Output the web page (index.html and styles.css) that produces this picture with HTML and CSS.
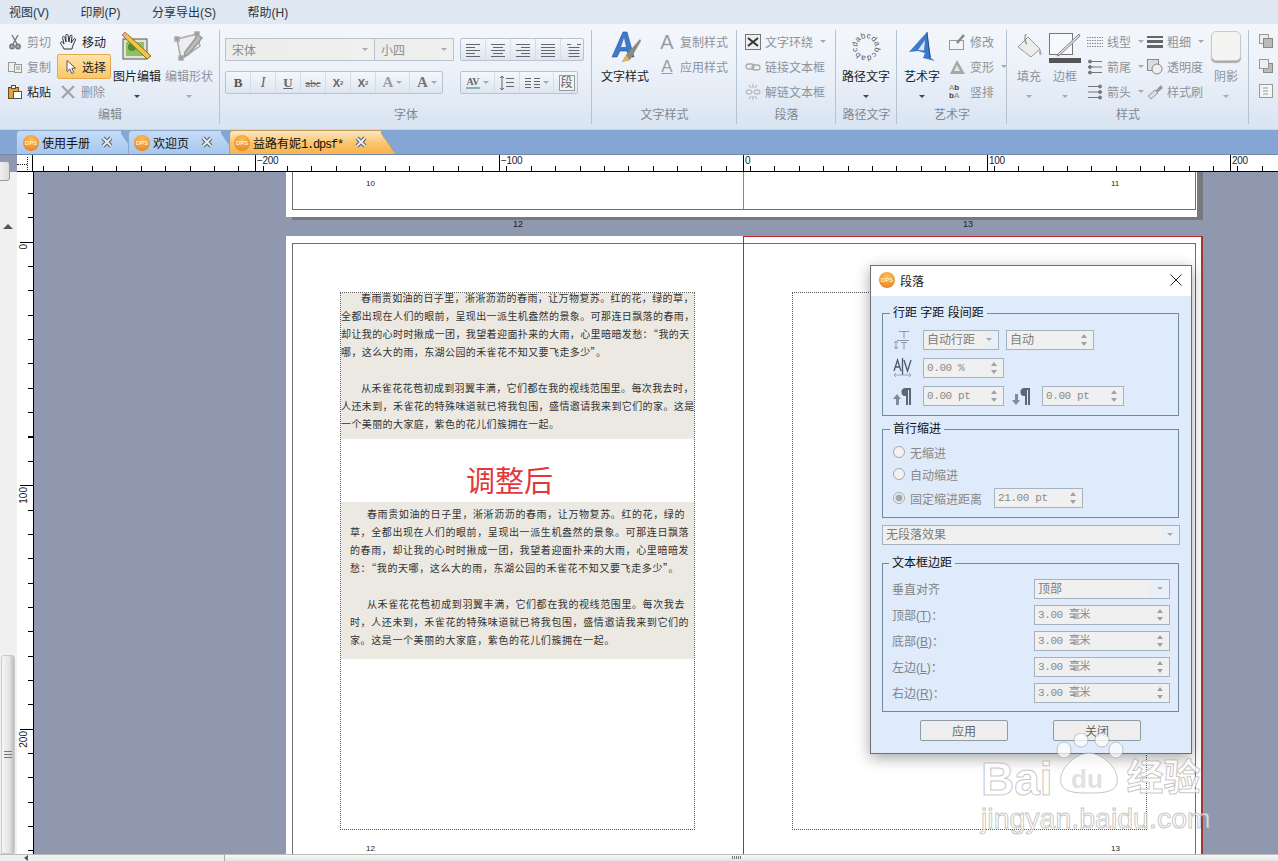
FILE: index.html
```html
<!DOCTYPE html>
<html lang="zh-CN">
<head>
    <meta charset="UTF-8">
    <title>段落</title>
    <link rel="stylesheet" href="styles.css">
</head>
<body>
<div class="app">
    <div class="menubar">
        <span>视图(V)</span><span>印刷(P)</span><span>分享导出(S)</span><span>帮助(H)</span>
    </div>

    <div class="ribbon">
        <!-- 编辑 -->
        <div class="grp grp-edit">
            <div class="grp-body">
                <div class="col col-cut">
                    <div class="sm off"><svg width="16" height="16" viewBox="0 0 16 16" fill="none" stroke="#777" stroke-width="1.4"><path d="M5 1l5 9M11 1L6 10"/><circle cx="5" cy="12.5" r="2.2" fill="#aaa"/><circle cx="11" cy="12.5" r="2.2" fill="#aaa"/></svg>剪切</div>
                    <div class="sm off"><svg width="16" height="16" viewBox="0 0 16 16" fill="#eee" stroke="#999"><rect x="1.5" y="3.5" width="7" height="9"/><rect x="7.5" y="5.5" width="7" height="8"/><path d="M9 8h4M9 10h4"/></svg>复制</div>
                    <div class="sm"><svg width="16" height="16" viewBox="0 0 16 16" stroke="#6b4a18"><rect x="1.5" y="3.5" width="10" height="11" fill="#d9a441"/><rect x="4.5" y="1.5" width="4" height="3" fill="#eee"/><rect x="6.5" y="7.5" width="8" height="7" fill="#fff" stroke="#456"/></svg>粘贴</div>
                </div>
                <div class="col col-move">
                    <div class="sm"><svg width="19" height="18" viewBox="0 0 19 18" fill="none" stroke="#333"><path d="M5 16c-1-3-4-5-3.500-6.500S4 9 5 11L3.500 4.500c0-1.500 2-1.500 2.300 0L7 9 6.800 2.500c0-1.500 2.200-1.500 2.300 0L10 9l1-6c.3-1.500 2.300-1.200 2 .5L12.200 10l2.500-4c.8-1.200 2.400-.3 1.800 1-1 2.500-3 5-3.500 9z"/></svg>移动</div>
                    <div class="sm sm-on"><svg width="14" height="16" viewBox="0 0 14 16" fill="#fff" stroke="#556"><path d="M3 1.500v11l2.800-2.500 2 4.500 2-1-2-4.300h3.700z"/></svg>选择</div>
                    <div class="sm off"><svg width="18" height="16" viewBox="0 0 18 16" fill="none" stroke="#a3a6ab" stroke-width="2.400"><path d="M3 2l12 12M15 2L3 14"/></svg>删除</div>
                </div>
                <div class="lg lg-img">
                    <div class="lg-icon"><svg width="32" height="30" viewBox="0 0 32 30"><rect x="2" y="8" width="24" height="20" fill="#dfe6d8" stroke="#555"/><rect x="5" y="11" width="18" height="14" fill="#8fc069"/><circle cx="11" cy="16" r="4" fill="#4e8f2f"/><path d="M4 1l26 24-4 3L1 4z" fill="#f2c542" stroke="#8a6a16"/><path d="M1 4l3-3 3 2.500-3 3z" fill="#e8a0a0"/></svg></div>
                    <span>图片编辑</span><i class="caret caret-dark"></i>
                </div>
                <div class="lg off lg-shape">
                    <div class="lg-icon"><svg width="30" height="30" viewBox="0 0 30 30" fill="none" stroke="#aaa" stroke-width="1.500"><path d="M3 8l20-5 3 12-19 13z" fill="#eee"/><path d="M24 4L11 21l-1 5 5-3L28 7z" fill="#bbb" stroke="#999"/><rect x="1" y="6" width="4" height="4" fill="#999"/><rect x="21" y="1" width="4" height="4" fill="#999"/><rect x="5" y="25" width="4" height="4" fill="#999"/></svg></div>
                    <span>编辑形状</span><i class="caret"></i>
                </div>
            </div>
            <div class="grp-label">编辑</div>
        </div>

        <!-- 字体 -->
        <div class="grp grp-font">
            <div class="grp-body font-rows">
                <div class="font-row">
                    <div class="combo combo-font">宋体<i class="caret"></i></div>
                    <div class="combo combo-size">小四<i class="caret"></i></div>
                    <div class="tools tools-align">
                        <b class="tool"><svg width="16" height="14" viewBox="0 0 16 14" stroke="#666"><path d="M1 1.500h14M1 4.500h9M1 7.500h14M1 10.500h9M1 13.500h14"/></svg></b>
                        <b class="tool"><svg width="16" height="14" viewBox="0 0 16 14" stroke="#666"><path d="M1 1.500h14M3 4.500h10M1 7.500h14M3 10.500h10M1 13.500h14"/></svg></b>
                        <b class="tool"><svg width="16" height="14" viewBox="0 0 16 14" stroke="#666"><path d="M1 1.500h14M6 4.500h9M1 7.500h14M6 10.500h9M1 13.500h14"/></svg></b>
                        <b class="tool"><svg width="16" height="14" viewBox="0 0 16 14" stroke="#666"><path d="M1 1.500h14M1 4.500h14M1 7.500h14M1 10.500h14M1 13.500h14"/></svg></b>
                        <b class="tool"><svg width="16" height="16" viewBox="0 0 16 16" stroke="#666" fill="none"><path d="M1 2.500h4M11 2.500h4M2.500 5.500h11M2.500 8.500h11M2.500 11.500h11M2.500 14.500h11"/></svg></b>
                    </div>
                </div>
                <div class="font-row">
                    <div class="tools tools-format">
                        <b class="tool tx-b">B</b>
                        <b class="tool tx-i">I</b>
                        <b class="tool tx-u">U</b>
                        <b class="tool tx-s">abc</b>
                        <b class="tool tx-x">X<sub>2</sub></b>
                        <b class="tool tx-x">X<sup>2</sup></b>
                        <b class="tool tool-wide tx-a">A<i class="caret"></i></b>
                        <b class="tool tool-wide tx-a tx-a2">A<i class="caret"></i></b>
                    </div>
                    <div class="tools tools-para">
                        <b class="tool tool-wide tx-av"><span>AV</span><i class="caret"></i></b>
                        <b class="tool"><svg width="16" height="16" viewBox="0 0 16 16" stroke="#666" fill="none"><path d="M3 1v14M1 3l2-2 2 2M1 13l2 2 2-2M7 3.500h8M7 7.500h8M7 11.500h8"/></svg></b>
                        <b class="tool tool-wide"><svg width="15" height="12" viewBox="0 0 15 12" stroke="#666"><path d="M0 1.500h6M0 4.500h6M0 7.500h6M0 10.500h6M9 1.500h6M9 4.500h6M9 7.500h6M9 10.500h6"/></svg><i class="caret"></i></b>
                        <b class="tool tx-duan"><span>段</span></b>
                    </div>
                </div>
            </div>
            <div class="grp-label">字体</div>
        </div>

        <!-- 文字样式 -->
        <div class="grp grp-tstyle">
            <div class="grp-body">
                <div class="lg lg-tstyle">
                    <div class="lg-icon"><svg width="34" height="32" viewBox="0 0 34 32"><path d="M15 1h4l7 25h-5l-2-6h-7l-3 6H4z" fill="#3f79c9" stroke="#23508f" stroke-width=".6"/><path d="M16 7l-3 9h5z" fill="#e7eff9"/><path d="M32 8L18 24l-4 7 8-2 11-19z" fill="#8d8a80"/><path d="M14 31l4-7 4 5z" fill="#e3b25a"/></svg></div>
                    <span>文字样式</span>
                </div>
                <div class="col col-tstyle">
                    <div class="sm off"><span class="big-a">A</span>复制样式</div>
                    <div class="sm off"><span class="big-a big-a2">A</span>应用样式</div>
                </div>
            </div>
            <div class="grp-label">文字样式</div>
        </div>

        <!-- 段落 -->
        <div class="grp grp-para">
            <div class="grp-body">
                <div class="col col-para">
                    <div class="sm off"><svg width="16" height="16" viewBox="0 0 16 16" stroke="#777"><rect x=".5" y=".5" width="15" height="15" fill="#eee"/><path d="M3 4l10 8M13 4L3 12" stroke="#333" stroke-width="2"/></svg>文字环绕<i class="caret"></i></div>
                    <div class="sm off"><svg width="16" height="16" viewBox="0 0 16 16" fill="none" stroke="#aaa" stroke-width="1.300"><rect x="1" y="5" width="8" height="5" rx="2.500"/><rect x="7" y="6" width="8" height="5" rx="2.500"/></svg>链接文本框</div>
                    <div class="sm off"><svg width="16" height="16" viewBox="0 0 16 16" fill="none" stroke="#aaa"><path d="M4 1l2 3M8 0v4M12 1l-2 3M4 15l2-3M8 16v-4M12 15l-2-3"/><rect x="1" y="6" width="6" height="4" rx="2"/><rect x="9" y="6" width="6" height="4" rx="2"/></svg>解链文本框</div>
                </div>
            </div>
            <div class="grp-label">段落</div>
        </div>

        <!-- 路径文字 -->
        <div class="grp grp-path">
            <div class="grp-body">
                <div class="lg lg-path">
                    <div class="lg-icon"><svg class="path-ico" width="32" height="32" viewBox="0 0 32 32" fill="none"><path id="ringPath" d="M16 25a9 9 0 1 1 .1 0z"/><text><textPath href="#ringPath">abcdabcdabcd</textPath></text></svg></div>
                    <span>路径文字</span><i class="caret caret-dark"></i>
                </div>
            </div>
            <div class="grp-label">路径文字</div>
        </div>

        <!-- 艺术字 -->
        <div class="grp grp-art">
            <div class="grp-body">
                <div class="lg lg-art">
                    <div class="lg-icon"><svg width="28" height="32" viewBox="0 0 28 32"><path d="M19 1L1 21l9-1 7 2-2 5 12 3-4-3z" fill="#3f79c9"/><path d="M17 9l-7 10 6 .500z" fill="#dbe6f3"/><path d="M19 1l3 26" stroke="#23508f"/></svg></div>
                    <span>艺术字</span><i class="caret caret-dark"></i>
                </div>
                <div class="col col-art">
                    <div class="sm off"><svg width="17" height="16" viewBox="0 0 17 16"><rect x=".5" y="6.500" width="14" height="9" fill="#f4f4f4" stroke="#999"/><path d="M15 1L8 9" stroke="#888" stroke-width="2.500"/></svg>修改</div>
                    <div class="sm off"><svg width="17" height="16" viewBox="0 0 17 16"><path d="M8 1l8 14H1z" fill="#a5a8a6"/><path d="M8 6l-3 6h6z" fill="#e3e6e4"/></svg>变形<i class="caret"></i></div>
                    <div class="sm off"><span class="ab">A<b>b</b><br><b>b</b><span>A</span></span>竖排</div>
                </div>
            </div>
            <div class="grp-label">艺术字</div>
        </div>

        <!-- 样式 -->
        <div class="grp grp-style">
            <div class="grp-body">
                <div class="lg off lg-fill">
                    <div class="lg-icon"><svg width="28" height="32" viewBox="0 0 28 32"><path d="M3 16L13 6l12 12-9 8z" fill="#ececec" stroke="#999"/><path d="M11 3c-2 3-1 9 1 10" fill="none" stroke="#888" stroke-width="1.300"/><path d="M25 18c2 3 2 6 .5 6s-2-3-.5-6z" fill="#aaa"/></svg></div>
                    <span>填充</span><i class="caret"></i>
                </div>
                <div class="lg off lg-line">
                    <div class="lg-icon"><svg width="32" height="32" viewBox="0 0 32 32"><rect x=".5" y="2.500" width="23" height="21" fill="#f6f8fb" stroke="#777"/><path d="M30 3L10 22l-2 3 3-1L31 5z" fill="#ddd" stroke="#888"/><rect x="0" y="27" width="32" height="5" fill="#555"/></svg></div>
                    <span>边框</span><i class="caret"></i>
                </div>
                <div class="col col-ltype">
                    <div class="sm off"><svg width="16" height="16" viewBox="0 0 16 16" stroke="#888"><path d="M0 3.500h16M0 6.500h16M0 9.500h16M0 12.500h16" stroke-dasharray="1.500 1"/></svg>线型<i class="caret"></i></div>
                    <div class="sm off"><svg width="16" height="16" viewBox="0 0 16 16" stroke="#777"><path d="M1 2.500h14M1 8h14M1 13.500h14"/><circle cx="3" cy="2.500" r="1.500" fill="#777"/><circle cx="3" cy="8" r="1.500" fill="#777"/><circle cx="3" cy="13.500" r="1.500" fill="#777"/></svg>箭尾<i class="caret"></i></div>
                    <div class="sm off"><svg width="16" height="16" viewBox="0 0 16 16" stroke="#777"><path d="M1 2.500h14M1 8h14M1 13.500h14"/><circle cx="13" cy="2.500" r="1.500" fill="#777"/><circle cx="13" cy="8" r="1.500" fill="#777"/><circle cx="13" cy="13.500" r="1.500" fill="#777"/></svg>箭头<i class="caret"></i></div>
                </div>
                <div class="col col-thick">
                    <div class="sm off"><svg width="16" height="16" viewBox="0 0 16 16" fill="#666"><rect y="2" width="16" height="2"/><rect y="6" width="16" height="3"/><rect y="11" width="16" height="3"/></svg>粗细<i class="caret"></i></div>
                    <div class="sm off"><svg width="16" height="16" viewBox="0 0 16 16"><rect x=".5" y=".5" width="11" height="11" fill="#ddd" stroke="#888"/><circle cx="10" cy="10" r="5" fill="#eee" stroke="#888"/></svg>透明度</div>
                    <div class="sm off"><svg width="16" height="16" viewBox="0 0 16 16"><path d="M14 1L8 7l2 2 6-5z" fill="#999"/><path d="M8 6L1 12l3 3 7-6z" fill="#ddd" stroke="#999"/></svg>样式刷</div>
                </div>
                <div class="lg off lg-shadow">
                    <div class="lg-icon"><div class="shadow-box"></div></div>
                    <span>阴影</span><i class="caret"></i>
                </div>
            </div>
            <div class="grp-label">样式</div>
        </div>

        <!-- 排列 (cut off) -->
        <div class="grp-cut">
            <svg width="14" height="14" viewBox="0 0 14 14"><rect x=".5" y=".5" width="9" height="9" fill="#eee" stroke="#999"/><rect x="4.500" y="4.500" width="9" height="9" fill="#bbb" stroke="#888"/></svg>
            <svg width="14" height="14" viewBox="0 0 14 14"><rect x="4.500" y="4.500" width="9" height="9" fill="#bbb" stroke="#888"/><rect x=".5" y=".5" width="9" height="9" fill="#eee" stroke="#999"/></svg>
            <svg width="14" height="14" viewBox="0 0 14 14" fill="#f4f4f4" stroke="#999"><rect x=".5" y=".5" width="13" height="13"/><path d="M4 4h5M4 7h5M4 10h5"/></svg>
        </div>
    </div>

    <div class="tabbar">
        <div class="tab tab1"><span class="dps">DPS</span><span>使用手册</span><svg class="tab-x" width="12" height="12" viewBox="0 0 12 12" fill="none"><path d="M2 2l8 8M10 2L2 10" stroke="#556070" stroke-width="4"/><path d="M2 2l8 8M10 2L2 10" stroke="#e8edf3" stroke-width="2"/></svg></div>
        <div class="tab tab2"><span class="dps">DPS</span><span>欢迎页</span><svg class="tab-x" width="12" height="12" viewBox="0 0 12 12" fill="none"><path d="M2 2l8 8M10 2L2 10" stroke="#556070" stroke-width="4"/><path d="M2 2l8 8M10 2L2 10" stroke="#e8edf3" stroke-width="2"/></svg></div>
        <div class="tab tab3 active"><span class="dps">DPS</span><span>益路有妮<em>1.dpsf*</em></span><svg class="tab-x" width="12" height="12" viewBox="0 0 12 12" fill="none"><path d="M2 2l8 8M10 2L2 10" stroke="#556070" stroke-width="4"/><path d="M2 2l8 8M10 2L2 10" stroke="#e8edf3" stroke-width="2"/></svg></div>
    </div>

    <div class="hruler">
        <div class="corner"></div>
        <span class="hmark" style="left:255px">−200</span>
        <span class="hmark" style="left:499px">−100</span>
        <span class="hmark" style="left:743px">0</span>
        <span class="hmark" style="left:987px">100</span>
        <span class="hmark" style="left:1230px">200</span>
    </div>

    <div class="main">
        <div class="vscroll">
            <div class="vs-top"></div>
            <i class="vs-up"></i>
            <div class="vs-thumb"><span></span></div>
        </div>
        <div class="vruler">
            <span class="vmark" style="top:70px"><em>0</em></span>
            <span class="vmark" style="top:313px"><em>100</em></span>
            <span class="vmark" style="top:557px"><em>200</em></span>
        </div>

        <div class="canvas">
            <div class="page page-prev">
                <div class="page-inner"></div>
                <span class="fold"></span>
                <span class="pno pno-10">10</span>
                <span class="pno pno-11">11</span>
            </div>
            <span class="pno pno-12">12</span>
            <span class="pno pno-13">13</span>

            <div class="page page-cur">
                <div class="page-inner"></div>
                <div class="spread-right"></div>
                <span class="pno pno-b12">12</span>
                <span class="pno pno-b13">13</span>

                <div class="frame frame-left">
                    <div class="para-block before">
                        <p class="ind">春雨贵如油的日子里，淅淅沥沥的春雨，让万物复苏。红的花，绿的草，<br>全都出现在人们的眼前，呈现出一派生机盎然的景象。可那连日飘落的春雨，<br>却让我的心时时揪成一团，我望着迎面扑来的大雨，心里暗暗发愁：“我的天<br>哪，这么大的雨，东湖公园的禾雀花不知又要飞走多少”。</p>
                        <p class="ind gap">从禾雀花花苞初成到羽翼丰满，它们都在我的视线范围里。每次我去时，<br>人还未到，禾雀花的特殊味道就已将我包围，盛情邀请我来到它们的家。这是<br>一个美丽的大家庭，紫色的花儿们簇拥在一起。</p>
                    </div>
                    <div class="after-title">调整后</div>
                    <div class="para-block after">
                        <p class="ind">春雨贵如油的日子里，淅淅沥沥的春雨，让万物复苏。红的花，绿的<br>草，全都出现在人们的眼前，呈现出一派生机盎然的景象。可那连日飘落<br>的春雨，却让我的心时时揪成一团，我望着迎面扑来的大雨，心里暗暗发<br>愁：“我的天哪，这么大的雨，东湖公园的禾雀花不知又要飞走多少”。</p>
                        <p class="ind gap">从禾雀花花苞初成到羽翼丰满，它们都在我的视线范围里。每次我去<br>时，人还未到，禾雀花的特殊味道就已将我包围，盛情邀请我来到它们的<br>家。这是一个美丽的大家庭，紫色的花儿们簇拥在一起。</p>
                    </div>
                </div>
                <div class="frame frame-right"></div>
            </div>

            <!-- 段落 dialog -->
            <div class="dialog">
                <div class="dlg-title">
                    <span class="dps dps-lg">DPS</span>
                    <span class="dlg-name">段落</span>
                    <svg class="dlg-close" width="12" height="12" viewBox="0 0 12 12" stroke="#222" fill="none"><path d="M.5.500l11 11M11.500.500l-11 11"/></svg>
                </div>
                <div class="dlg-body">
                    <fieldset class="fs fs-spacing">
                        <legend>行距 字距 段间距</legend>
                        <div class="row">
                            <svg class="row-ico" width="18" height="20" viewBox="0 0 18 20" stroke="#8b97a5" fill="none"><path d="M6 1.500h10M11 1.500v7M4 10.500h12M3 11v8M1 13l2-2 2 2M1 17l2 2 2-2M8 12.500h6M11 12.500v7"/></svg>
                            <div class="field w76 off-combo">自动行距<i class="caret"></i></div>
                            <div class="field w88 spin">自动</div>
                        </div>
                        <div class="row">
                            <svg class="row-ico" width="20" height="20" viewBox="0 0 20 20" stroke="#4d5966" fill="none" stroke-width="1.300"><path d="M1 13L4.500 2 8 13M2.300 9h4.400M11 2l3.500 11L18 2M9.500 0v17"/><path d="M1 17h17M3 15l-2 2 2 2M16 15l2 2-2 2" stroke="#99a4b0" stroke-width="1"/></svg>
                            <div class="field w81 spin mono">0.00 %</div>
                        </div>
                        <div class="row">
                            <svg class="row-ico" width="18" height="20" viewBox="0 0 18 20"><path d="M4 8l4 5H6v6H3v-6H0z" fill="#7f8c9a"/><path d="M12 2h6v17h-2V4h-1v15h-2v-9a4 4 0 0 1-1-8z" fill="#5a6774"/></svg>
                            <div class="field w81 spin mono">0.00 pt</div>
                            <svg class="row-ico2" width="18" height="20" viewBox="0 0 18 20"><path d="M4 19l4-5H6V8H3v6H0z" fill="#7f8c9a"/><path d="M12 2h6v17h-2V4h-1v15h-2v-9a4 4 0 0 1-1-8z" fill="#5a6774"/></svg>
                            <div class="field w82 spin mono">0.00 pt</div>
                        </div>
                    </fieldset>
                    <fieldset class="fs fs-indent">
                        <legend>首行缩进</legend>
                        <div class="radio-row"><i class="radio"></i>无缩进</div>
                        <div class="radio-row"><i class="radio"></i>自动缩进</div>
                        <div class="radio-row radio-last"><i class="radio checked"></i>固定缩进距离<div class="field w89 spin mono">21.00 pt</div></div>
                    </fieldset>
                    <div class="field effect off-combo">无段落效果<i class="caret"></i></div>
                    <fieldset class="fs fs-margin">
                        <legend>文本框边距</legend>
                        <div class="mrow"><span>垂直对齐</span><div class="field w136 off-combo">顶部<i class="caret"></i></div></div>
                        <div class="mrow"><span>顶部(<u>T</u>)：</span><div class="field w136 spin mono">3.00 毫米</div></div>
                        <div class="mrow"><span>底部(<u>B</u>)：</span><div class="field w136 spin mono">3.00 毫米</div></div>
                        <div class="mrow"><span>左边(<u>L</u>)：</span><div class="field w136 spin mono">3.00 毫米</div></div>
                        <div class="mrow"><span>右边(<u>R</u>)：</span><div class="field w136 spin mono">3.00 毫米</div></div>
                    </fieldset>
                    <div class="dlg-btns">
                        <button type="button">应用</button>
                        <button type="button">关闭</button>
                    </div>
                </div>
            </div>

            <!-- watermark -->
            <div class="wm">
                <div class="wm-top">
                    <span class="wm-bai">Bai</span>
                    <svg class="wm-paw" width="70" height="62" viewBox="0 0 70 62" fill="rgba(255,255,255,.72)" stroke="rgba(150,150,150,.55)"><ellipse cx="10" cy="17" rx="7" ry="8"/><ellipse cx="27" cy="7" rx="7" ry="7"/><ellipse cx="48" cy="7" rx="7" ry="7"/><ellipse cx="62" cy="17" rx="7" ry="8"/><path d="M35 20c12 0 31 15 28 30-2 10-16 10-28 10S9 60 7 50C4 35 23 20 35 20z"/><text x="17" y="55" class="wm-du">du</text></svg>
                    <span class="wm-cn">经验</span>
                </div>
                <div class="wm-url">jingyan.baidu.com</div>
            </div>
        </div>
    </div>

    <div class="hscroll">
        <i class="hs-left"></i>
        <div class="hs-thumb"><span></span></div>
    </div>
</div>
</body>
</html>
```

FILE: styles.css
```css
* {
    box-sizing: border-box;
}

html, body {
    margin: 0;
    height: 100%;
    overflow: hidden;
}

body {
    font-family: "Liberation Sans", "Noto Sans CJK SC", sans-serif;
    font-size: 12px;
    color: #222;
}

.app {
    width: 1278px;
    height: 861px;
    display: flex;
    flex-direction: column;
    background: #8f98ae;
}

/* menu */
.menubar {
    height: 25px;
    flex: none;
    display: flex;
    align-items: center;
    gap: 31.500px;
    padding: 0 0 1px 9px;
    background: #dfe8f3;
    border-bottom: 1px solid #f2f6fb;
    color: #2c3442;
}

/* ribbon */
.ribbon {
    height: 105px;
    flex: none;
    display: flex;
    background: linear-gradient(#f3f7fc, #eef3fa 35%, #d9e4f2);
    border-bottom: 1px solid #c9d6e6;
}

.grp {
    position: relative;
    display: flex;
    flex-direction: column;
    flex: none;
}

.grp::after {
    content: "";
    position: absolute;
    right: 0;
    top: 5px;
    bottom: 5px;
    width: 1px;
    background: #b4c2d2;
}

.grp-edit { width: 220px; }
.grp-font { width: 372px; }
.grp-tstyle { width: 145px; }
.grp-para { width: 99px; }
.grp-path { width: 61px; }
.grp-art { width: 110px; }
.grp-style { width: 242px; }

.grp-body {
    height: 79px;
    display: flex;
}

.grp-label {
    height: 25px;
    padding-top: 3px;
    text-align: center;
    color: #83888e;
    line-height: 17px;
}

.grp-cut {
    display: flex;
    flex-direction: column;
    gap: 11px;
    padding: 9px 0 0 10px;
}

.col {
    display: flex;
    flex-direction: column;
    padding-top: 4px;
    flex: none;
}

.sm {
    height: 25px;
    display: flex;
    align-items: center;
    gap: 4px;
    white-space: nowrap;
}

.off {
    color: #8f9398;
}

.sm-on {
    margin-left: -2px;
    width: 54px;
    padding-left: 6px;
    gap: 4px;
    background: linear-gradient(#fde3a8, #fbc768);
    border: 1px solid #e3a94e;
    border-radius: 2px;
}

.col-cut { width: 56px; padding-left: 7px; }
.col-move { width: 51px; padding-left: 3px; }
.col-tstyle { margin-left: 8px; }
.col-para { margin-left: 8px; }
.col-art { margin-left: 4px; }
.col-ltype { width: 60px; margin-left: 4px; }
.col-thick { width: 60px; }

.lg {
    display: flex;
    flex-direction: column;
    align-items: center;
    flex: none;
    white-space: nowrap;
}

.lg-icon {
    height: 42px;
    padding-top: 6px;
    display: flex;
    justify-content: center;
}

.lg > span {
    line-height: 20px;
}

.lg > .caret {
    margin: 8px 0 0;
}

.lg-img { width: 50px; margin-left: 5px; }
.lg-shape { width: 50px; margin-left: 2px; }
.lg-tstyle { width: 50px; margin-left: 8px; }
.lg-path { width: 60px; }
.lg-art { width: 46px; margin-left: 2px; }
.lg-fill { width: 36px; margin-left: 4px; }
.lg-line { width: 36px; }
.lg-shadow { width: 36px; margin-left: 1px; }

.caret {
    display: inline-block;
    width: 0;
    height: 0;
    margin-left: 3px;
    border: 3px solid transparent;
    border-top: 3px solid #a5aab0;
    border-bottom: 0;
}

.caret-dark {
    border-top-color: #444;
}

.big-a {
    width: 18px;
    margin-left: 0;
    font-family: "Liberation Sans", sans-serif;
    font-size: 20px;
    line-height: 20px;
    color: #9a9da1;
    text-align: center;
}

.big-a2 {
    font-size: 17px;
    text-decoration: underline;
}

.ab {
    width: 17px;
    font-size: 8px;
    line-height: 8px;
    color: #888;
}

.ab b {
    color: #444;
}

.shadow-box {
    width: 30px;
    height: 30px;
    background: #f4f4f2;
    border: 1px solid #c9c9c9;
    border-radius: 5px;
    box-shadow: 0 2px 1px #aaa;
}

.path-ico text {
    font: 8px "Liberation Sans", sans-serif;
    letter-spacing: .3px;
    fill: #555;
    stroke: none;
}

/* font group */
.font-rows {
    flex-direction: column;
    gap: 10px;
    padding: 13px 0 0 5px;
}

.font-row {
    display: flex;
    height: 23px;
}

.combo {
    height: 23px;
    display: flex;
    align-items: center;
    justify-content: space-between;
    padding: 0 6px;
    background: linear-gradient(90deg, #ececea, #f0f0ee);
    border: 1px solid #b9c3cf;
    color: #8a8d90;
}

.combo-font { width: 150px; }
.combo-size { width: 80px; margin-left: -1px; }

.tools {
    display: flex;
    height: 23px;
    background: linear-gradient(#f4f7fb, #dde6f1);
    border: 1px solid #b9c3cf;
    border-radius: 2px;
    flex: none;
}

.tools-align { width: 124px; margin-left: 6px; }
.tools-format { width: 218px; }
.tools-para { width: 118px; margin-left: 17px; }

.tool {
    width: 25px;
    flex: none;
    display: flex;
    align-items: center;
    justify-content: center;
    border-right: 1px solid #d5dde7;
    font-weight: normal;
    color: #666;
    overflow: hidden;
}

.tool:last-child {
    border-right: 0;
}

.tool-wide {
    width: 34px;
}

.tx-b { font: bold 13px "Liberation Serif", serif; color: #555; }
.tx-i { font: italic 14px "Liberation Serif", serif; }
.tx-u { font: bold 13px "Liberation Serif", serif; text-decoration: underline; }
.tx-s { font: 11px "Liberation Serif", serif; text-decoration: line-through; }
.tx-x { font: bold 11px "Liberation Sans", sans-serif; }
.tx-x sub, .tx-x sup { font-size: 6px; }
.tx-a { font: bold 15px "Liberation Serif", serif; color: #9a9ea3; }
.tx-a2 { color: #777; }
.tx-av span { font: bold 10px "Liberation Serif", serif; border-bottom: 2px solid #9aa; }

.tx-duan span {
    width: 16px;
    height: 16px;
    border: 1px solid #999;
    font-size: 12px;
    line-height: 14px;
    text-align: center;
    background: #f3f3f3;
}

/* tabs */
.tabbar {
    height: 25px;
    flex: none;
    display: flex;
    align-items: flex-end;
    padding-left: 16px;
    background: #85a5d4;
    border-bottom: 1px solid #6e88ab;
    position: relative;
    z-index: 1;
}

.tab {
    position: relative;
    height: 24px;
    display: flex;
    align-items: center;
    color: #111;
    border-top-left-radius: 4px;
    background: linear-gradient(#c5dbf6, #a7c7ef);
    border-top: 1px solid #8ba8cf;
    border-left: 1px solid #8ba8cf;
}

.tab::after {
    content: "";
    position: absolute;
    z-index: -1;
    top: -1px;
    bottom: 0;
    right: -7px;
    width: 20px;
    background: inherit;
    transform: skewX(35deg);
    border-top: 1px solid #8ba8cf;
    border-right: 1px solid #8ba8cf;
    border-top-right-radius: 4px;
}

.tab1 { width: 105px; padding-left: 6px; }
.tab2 { width: 93px; margin-left: 7px; padding-left: 5px; }
.tab3 { width: 152px; margin-left: 8px; padding-left: 4px; }

.tab.active {
    background: linear-gradient(#f9e8c6, #fbc66f 50%, #f9b34e);
    border-color: #c59a58;
}

.tab.active::after {
    border-color: #c59a58;
}

.tab em {
    font: 12px "Liberation Mono", monospace;
    letter-spacing: -1.200px;
}

.dps {
    width: 16px;
    height: 16px;
    margin-right: 3px;
    flex: none;
    border-radius: 50%;
    background: radial-gradient(circle at 50% 30%, #fbc057, #e67a14);
    color: #fff;
    font-size: 6px;
    line-height: 16px;
    text-align: center;
    overflow: hidden;
}

.tab-x {
    position: absolute;
    top: 5px;
}

.tab1 .tab-x { left: 84px; }
.tab2 .tab-x { left: 72px; }
.tab3 .tab-x { left: 125px; }

/* rulers */
.hruler {
    position: relative;
    height: 17px;
    flex: none;
    margin-left: 17px;
    background-color: #fff;
    background-image: repeating-linear-gradient(90deg, #000 0 1px, transparent 1px 24.370px);
    background-size: 100% 5px;
    background-position: 2px bottom;
    background-repeat: no-repeat;
    border-bottom: 1px solid #000;
}

.corner {
    position: absolute;
    left: 0;
    top: 0;
    width: 16px;
    height: 16px;
    background: #fff;
    border-right: 1px solid #000;
}

.corner::before {
    content: "";
    position: absolute;
    left: 0;
    top: 9px;
    width: 10px;
    border-top: 1px dotted #222;
}

.corner::after {
    content: "";
    position: absolute;
    left: 10px;
    top: 2px;
    height: 13px;
    border-left: 1px dotted #222;
}

.hmark {
    position: absolute;
    top: 0;
    height: 16px;
    margin-left: -17px;
    padding-left: 1px;
    border-left: 1px solid #000;
    font-size: 10px;
    letter-spacing: -.3px;
    line-height: 12px;
    color: #222;
}

.main {
    flex: 1;
    min-height: 0;
    display: flex;
}

.vscroll {
    position: relative;
    width: 17px;
    flex: none;
    background: #f0f0f0;
}

.vs-top {
    position: absolute;
    left: -4px;
    top: -11px;
    width: 14px;
    height: 20px;
    background: linear-gradient(90deg, #f2f2f2, #ddd);
    border: 1px solid #999;
    border-radius: 3px;
}

.vs-up {
    position: absolute;
    left: 3px;
    top: 52px;
    border: 5px solid transparent;
    border-top: 0;
    border-bottom: 5px solid #555;
}

.vs-thumb {
    position: absolute;
    left: 1px;
    top: 483px;
    bottom: 0;
    width: 14px;
    display: flex;
    align-items: center;
    justify-content: center;
    background: linear-gradient(90deg, #f6f6f6, #e4e4e4 60%, #bbb);
    border: 1px solid #ccc;
    border-radius: 3px 3px 0 0;
}

.vs-thumb span {
    width: 8px;
    height: 7px;
    border-top: 1px solid #777;
    border-bottom: 1px solid #777;
    background: linear-gradient(#777, #777) center / 100% 1px no-repeat;
}

.vruler {
    position: relative;
    width: 17px;
    flex: none;
    background-color: #fff;
    background-image: repeating-linear-gradient(#000 0 1px, transparent 1px 24.350px);
    background-size: 5px 100%;
    background-position: right 21px;
    background-repeat: no-repeat;
    border-right: 1px solid #000;
}

.vmark {
    position: absolute;
    left: 3px;
    right: 0;
    border-top: 1px solid #000;
}

.vmark em {
    position: absolute;
    left: -1px;
    top: 1px;
    writing-mode: vertical-rl;
    transform: rotate(180deg);
    font-style: normal;
    font-size: 10px;
    line-height: 10px;
}

/* canvas */
.canvas {
    position: relative;
    flex: 1;
    overflow: hidden;
    background: #8f98ae;
}

.page {
    position: absolute;
    left: 252px;
    background: #fff;
}

.page-prev {
    top: -20px;
    width: 911px;
    height: 65px;
    box-shadow: 6px 3px 0 #77797e;
}

.page-cur {
    top: 64px;
    width: 917px;
    height: 700px;
}

.page-inner {
    position: absolute;
    left: 6px;
    width: 904px;
    border: 1px solid #6e6e6e;
}

.page-prev .page-inner {
    top: 0;
    bottom: 7px;
}

.page-cur .page-inner {
    top: 7px;
    bottom: 0;
}

.fold {
    position: absolute;
    left: 457px;
    top: 0;
    bottom: 8px;
    border-left: 1px solid #888;
}

.spread-right {
    position: absolute;
    left: 457px;
    top: 0;
    right: 0;
    bottom: 0;
    border-left: 1px solid #c8222a;
    border-top: 1px solid #c8222a;
    border-right: 2px solid #9c3a3a;
}

.pno {
    position: absolute;
    font-size: 8px;
    line-height: 10px;
    color: #222;
}

.pno-10 { left: 80px; top: 27px; }
.pno-11 { left: 825px; top: 27px; }
.pno-12 { left: 479px; top: 47px; font-size: 9px; }
.pno-13 { left: 929px; top: 47px; font-size: 9px; }
.pno-b12 { left: 80px; top: 608px; }
.pno-b13 { left: 825px; top: 608px; }

.frame {
    position: absolute;
    top: 56px;
    width: 355px;
    height: 538px;
    border: 1px dotted #555;
}

.frame-left { left: 54px; }
.frame-right { left: 506px; }

.para-block {
    background: #ebe9e2;
    font-family: "Noto Sans CJK SC", sans-serif;
    font-size: 10px;
    line-height: 18px;
    letter-spacing: .4px;
    white-space: nowrap;
    color: #333;
}

.para-block p {
    margin: 0;
}

.para-block .ind {
    text-indent: 20px;
}

.para-block .gap {
    margin-top: 18px;
}

.before {
    display: flow-root;
    height: 146px;
}

.before p:first-child {
    margin-top: -4px;
}

.after {
    height: 157px;
    padding: 3px 0 0 9px;
    letter-spacing: .6px;
}

.after .ind {
    text-indent: 17px;
}

.after-title {
    height: 63px;
    padding: 21px 16px 0 0;
    text-align: center;
    font-size: 29px;
    line-height: 44px;
    color: #e0383b;
}

/* dialog */
.dialog {
    position: absolute;
    left: 836px;
    top: 93px;
    width: 322px;
    height: 489px;
    background: #dfebfb;
    border: 1px solid #6c7075;
    box-shadow: 0 4px 14px rgba(0, 0, 0, .35);
}

.dlg-title {
    height: 30px;
    display: flex;
    align-items: center;
    padding: 0 9px 2px 8px;
    background: #fff;
}

.dps-lg {
    margin-right: 5px;
}

.dlg-name {
    flex: 1;
    color: #222;
}

.dlg-body {
    padding: 9px 12px 0 11px;
}

.fs {
    margin: 0;
    min-width: 0;
    border: 1px solid #6f8b9c;
    padding: 0;
}

.fs legend {
    margin-left: -3px;
    padding: 0 3px;
    height: 16px;
    line-height: 16px;
    color: #111;
}

.fs-spacing {
    height: 111px;
    padding: 9px 0 0 10px;
    display: flex;
    flex-direction: column;
    gap: 8px;
}

.fs-indent {
    height: 97px;
    margin-top: 5px;
    padding: 4px 0 0 10px;
    color: #888;
}

.fs-margin {
    height: 157px;
    margin-top: 10px;
    padding: 8px 8px 0 9px;
    display: flex;
    flex-direction: column;
    gap: 6px;
}

.row {
    position: relative;
    height: 20px;
    display: flex;
    padding-left: 30px;
    gap: 7px;
}

.row-ico {
    position: absolute;
    left: 0;
    top: 0;
}

.row-ico2 {
    margin: 0 5px 0 1px;
}

.field {
    position: relative;
    height: 20px;
    flex: none;
    padding-left: 3px;
    background: #f0f0f0;
    border: 1px solid #a5b2bf;
    color: #7d7d7d;
    line-height: 18px;
    white-space: nowrap;
}

.mono {
    font-family: "Liberation Mono", "Noto Sans CJK SC", monospace;
    font-size: 11px;
    letter-spacing: -.4px;
    line-height: 19px;
    color: #8a8a8a;
}

.w76 { width: 76px; }
.w81 { width: 81px; }
.w82 { width: 82px; }
.w88 { width: 88px; }
.w89 { width: 89px; margin-left: 12px; }
.w136 { width: 136px; }

.spin::before,
.spin::after {
    content: "";
    position: absolute;
    right: 6px;
    border: 3px solid transparent;
}

.spin::before {
    top: 3px;
    border-top: 0;
    border-bottom: 4px solid #9da2a8;
}

.spin::after {
    bottom: 3px;
    border-bottom: 0;
    border-top: 4px solid #9da2a8;
}

.off-combo {
    background: linear-gradient(90deg, #f0f0f0 85%, #e8eff9 85%);
}

.off-combo .caret {
    position: absolute;
    right: 6px;
    top: 7px;
}

.radio-row {
    height: 22px;
    display: flex;
    align-items: center;
}

.radio-last {
    margin-top: 3px;
    height: 20px;
}

.radio {
    width: 12px;
    height: 12px;
    margin-right: 5px;
    border-radius: 50%;
    background: #f2f2f2;
    border: 1px solid #a5a9ad;
}

.checked {
    background: radial-gradient(circle, #a5a9ad 0 3px, #f2f2f2 4px);
}

.effect {
    margin-top: 7px;
    width: 298px;
}

.effect.off-combo {
    background: linear-gradient(90deg, #f0f0f0 94%, #e8eff9 94%);
}

.mrow {
    height: 20px;
    display: flex;
    justify-content: space-between;
    align-items: center;
    color: #7f8387;
}

.mrow > span {
    padding-bottom: 2px;
}

.dlg-btns {
    display: flex;
    justify-content: space-between;
    padding: 8px 38px 0 38px;
}

.dlg-btns button {
    width: 88px;
    height: 21px;
    padding: 0;
    font: inherit;
    color: #666;
    background: #eeeeee;
    border: 1px solid #8f9aa5;
    border-radius: 2px;
}

/* watermark */
.wm {
    position: absolute;
    left: 947px;
    top: 561px;
    width: 240px;
    color: rgba(255, 255, 255, .72);
    -webkit-text-stroke: 1px rgba(150, 150, 150, .55);
    pointer-events: none;
}

.wm-top {
    display: flex;
    align-items: flex-end;
    height: 62px;
    white-space: nowrap;
}

.wm-bai {
    font-size: 46px;
    font-weight: bold;
    line-height: 46px;
    margin-bottom: -7px;
}

.wm-paw {
    margin-left: 1px;
    flex: none;
}

.wm-du {
    font: bold 26px "Liberation Sans", sans-serif;
    fill: rgba(205, 205, 205, .6);
    stroke: none;
}

.wm-cn {
    margin: 0 0 -6px 3px;
    font-size: 37px;
    font-weight: bold;
    line-height: 44px;
}

.wm-url {
    margin-top: 9px;
    font-size: 28.500px;
    line-height: 28px;
    white-space: nowrap;
}

/* bottom scrollbar */
.hscroll {
    position: relative;
    height: 7px;
    flex: none;
    background: #f0f0f0;
    border-top: 1px solid #bbb;
}

.hs-left {
    position: absolute;
    left: 24px;
    top: 0;
    border: 3px solid transparent;
    border-left: 0;
    border-right: 4px solid #555;
}

.hs-thumb {
    position: absolute;
    left: 224px;
    right: 0;
    top: 0;
    bottom: 0;
    display: flex;
    justify-content: center;
    background: linear-gradient(#f8f8f8, #e4e4e4);
    border-left: 1px solid #aaa;
}

.hs-thumb span {
    width: 9px;
    height: 3px;
    margin: 1px 0 0 -30px;
    background: repeating-linear-gradient(90deg, #777 0 1px, transparent 1px 2px);
}
```
